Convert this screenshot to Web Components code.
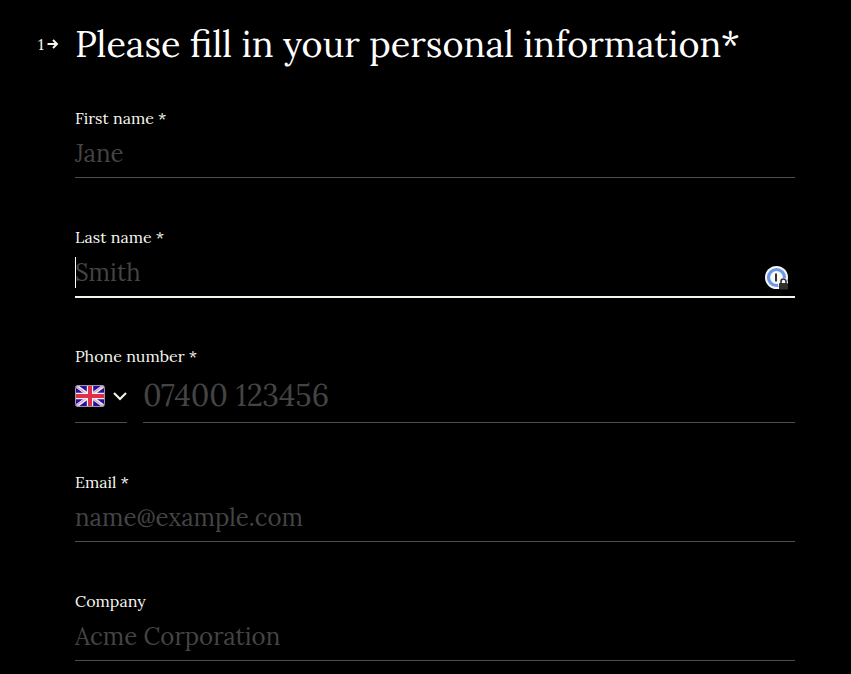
<!DOCTYPE html>
<html lang="en"><head><meta charset="utf-8"><title>Personal information</title>
<style>html{background:#000}body{margin:0;background:#000;color:#fff;font-family:Lora,"Liberation Serif",serif;height:674px;overflow:hidden}</style></head>
<body>
<question-form>
<question-heading slot="heading" number="1">Please fill in your personal information*</question-heading>
<form-field label="First name *">Jane</form-field>
<form-field label="Last name *" active>Smith<key-badge slot="end"></key-badge></form-field>
<form-field label="Phone number *" phone><country-picker slot="start"></country-picker>07400 123456</form-field>
<form-field label="Email *">name@example.com</form-field>
<form-field label="Company">Acme Corporation</form-field>
</question-form>
<script>
class Base extends HTMLElement{
  constructor(){super();this.attachShadow({mode:'open'}).innerHTML=this.view()}
}
customElements.define('question-form',class extends Base{
  view(){return `<style>:host{display:flex;flex-direction:column;padding:20px 56px 0 38px}
  .fields{display:grid;row-gap:49px;padding:40px 0 0 37px}</style>
  <slot name="heading"></slot><div class="fields"><slot></slot></div>`}
});
customElements.define('question-heading',class extends Base{
  view(){return `<style>:host{display:flex;align-items:center;height:48px;color:#fff}
  .n{display:flex;align-items:center;width:37px;font-size:16px;line-height:20px;color:#f5f5e9}
  svg{margin-left:3px}h1{margin:0;font-weight:400;font-size:36px;line-height:48px;white-space:nowrap}</style>
  <div class="n"><span>${this.getAttribute('number')}</span><svg width="12" height="10" viewBox="0 0 12 10" fill="none" stroke="#f5f5e9" stroke-width="2"><path d="M0.5 5H10M6 1l4 4-4 4"/></svg></div>
  <h1><slot></slot></h1>`}
});
customElements.define('form-field',class extends Base{
  view(){return `<style>:host{display:block;height:70px;--line:#4d4d4d}
  :host([phone]){height:77px}
  .label{height:20px;font-size:16px;line-height:20px;color:#f7f7ee}
  .row{display:flex;gap:16px;height:50px}
  :host([phone]) .row{height:57px}
  .input{flex:1;box-sizing:border-box;border-bottom:1px solid var(--line);display:flex;align-items:center;justify-content:space-between;font-size:24px;line-height:31px;padding-top:2px;color:#444}
  :host([phone]) .input{font-size:30px;line-height:38px}
  :host([active]) .input{height:51px;border-bottom:2px solid #f5f5e9}
  :host([active]) .value{box-shadow:inset 1px 0 #fff}
  </style><div class="label">${this.getAttribute('label')}</div>
  <div class="row"><slot name="start"></slot><div class="input"><div class="value"><slot></slot></div><slot name="end"></slot></div></div>`}
});
customElements.define('country-picker',class extends Base{
  view(){return `<style>:host{display:flex;box-sizing:border-box;align-items:center;width:52px;height:57px;gap:8px;padding-top:4px;border-bottom:1px solid #4d4d4d}svg{flex:none;display:block}</style>
  <svg width="30" height="22" viewBox="0 0 30 22"><defs><clipPath id="r"><rect width="30" height="22" rx="4"/></clipPath></defs>
  <g clip-path="url(#r)"><path fill="#28109b" d="M0 0h30v22H0z"/><path stroke="#f3e6f8" stroke-width="3.400" d="M0 0l30 22M30 0L0 22"/><path stroke="#d9a0c4" stroke-width="1.1" d="M0 .5l30 22M30-.5L0 21.500"/><path stroke="#f7f0f0" stroke-width="6.4" d="M15 0v22M0 11h30"/><path stroke="#df3048" stroke-width="4" d="M15 0v22M0 11h30"/></g>
  <rect x=".5" y=".5" width="29" height="21" rx="3.500" fill="none" stroke="#9a94a8"/></svg>
  <svg width="14" height="10" viewBox="0 0 14 10" fill="none" stroke="#f5f5ec" stroke-width="2"><path d="M1 2l6 6 6-6"/></svg>`}
});
customElements.define('key-badge',class extends Base{
  view(){return `<style>:host{display:block;width:24px;height:25px;margin:11px 6px 0 0}svg{display:block}</style>
  <svg width="24" height="25" viewBox="0 0 24 25"><circle cx="11.500" cy="11.500" r="11.500" fill="#f8f8f8"/><circle cx="11.500" cy="11.500" r="8" fill="#fafafa" stroke="#6c98e8" stroke-width="3.200"/><path stroke="#333" stroke-width="2" d="M11 7.500v8"/><path fill="#f8f8f8" d="M13 17l2-5h6l2 4v4H13z"/><rect x="14" y="17" width="9" height="6.500" rx="1" fill="#303030"/><path d="M16 17.500v-2a2.500 2.500 0 0 1 5 0v2" fill="none" stroke="#303030" stroke-width="1.600"/></svg>`}
});
</script></body></html>
